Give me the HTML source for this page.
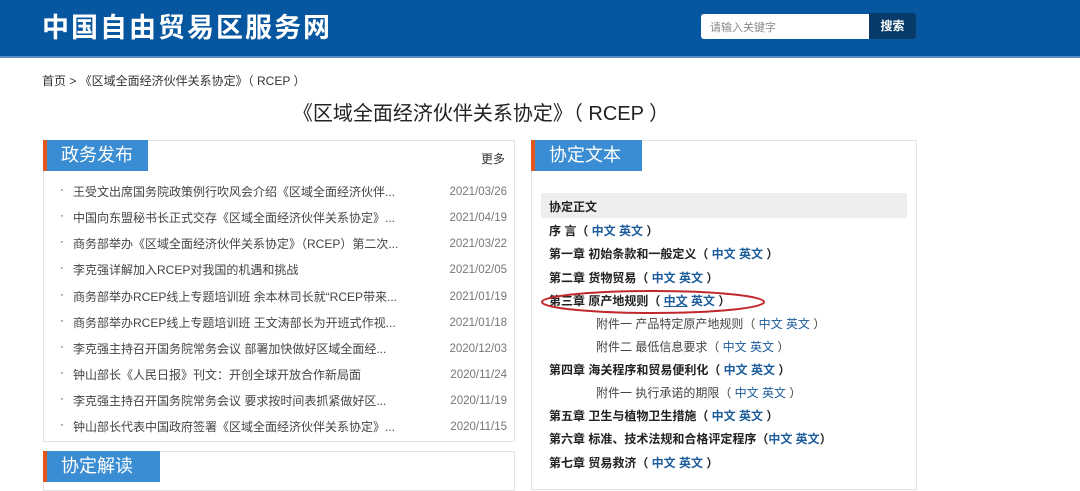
<!DOCTYPE html>
<html><head><meta charset="utf-8"><style>
*{margin:0;padding:0;box-sizing:border-box}
body{width:1080px;height:476px;overflow:hidden;background:#fff;font-family:"Liberation Sans","Noto Sans CJK SC",sans-serif;position:relative;color:#333}
.hdr{position:absolute;left:0;top:0;width:1080px;height:58px;background:#0657a0;border-bottom:2px solid #5b8fc4}
.logo{position:absolute;left:42px;top:6px;font-size:27px;font-weight:bold;color:#fff;letter-spacing:2px}
.inp{position:absolute;left:701px;top:14px;width:168px;height:25px;background:#fff;border-radius:3px 0 0 3px;font-size:11px;color:#888;padding:5px 9px}
.btn{position:absolute;left:869px;top:13px;width:47px;height:26px;background:#083a6a;border-radius:0 3px 3px 0;color:#fff;font-size:12px;font-weight:bold;text-align:center;line-height:26px}
.bc{position:absolute;left:42px;top:72px;font-size:12px;color:#333}
.title{position:absolute;left:0;width:962px;text-align:center;top:97px;font-size:20px;color:#222}
.panel{position:absolute;border:1px solid #e3e3e3;background:#fff}
.tab{position:absolute;left:-1px;top:-1px;height:31px;background:#3a8dd2;border-left:4px solid #e0561e;color:#fff;font-size:18px;line-height:30px;padding-left:14px}
.more{position:absolute;right:9px;top:9px;font-size:12px;color:#333}
.li{position:absolute;left:0;width:471px;font-size:12px;color:#444;height:16px;line-height:16px}
.li span{line-height:16px;top:0}
.li .b{position:absolute;left:16px;top:-3px}
.li .t{position:absolute;left:29px}
.li .d{position:absolute;right:8px;color:#777;font-size:11.5px}
.r{position:absolute;left:17px;font-size:12px;font-weight:bold;color:#222;white-space:nowrap}
.r.s{left:64px;font-weight:normal;color:#444}
.r a{color:#1d5d9b;text-decoration:none}
</style></head><body>
<div class="hdr"><div class="logo">中国自由贸易区服务网</div>
<div class="inp">请输入关键字</div><div class="btn">搜索</div></div>
<div class="bc">首页 &gt; 《区域全面经济伙伴关系协定》（ RCEP ）</div>
<div class="title">《区域全面经济伙伴关系协定》（ RCEP ）</div>

<div class="panel" style="left:43px;top:140px;width:472px;height:302px">
<div class="tab" style="width:105px">政务发布</div><div class="more">更多</div>
<div class="li" style="top:43px"><span class="b">·</span><span class="t">王受文出席国务院政策例行吹风会介绍《区域全面经济伙伴...</span><span class="d">2021/03/26</span></div>
<div class="li" style="top:69px"><span class="b">·</span><span class="t">中国向东盟秘书长正式交存《区域全面经济伙伴关系协定》...</span><span class="d">2021/04/19</span></div>
<div class="li" style="top:95px"><span class="b">·</span><span class="t">商务部举办《区域全面经济伙伴关系协定》（RCEP）第二次...</span><span class="d">2021/03/22</span></div>
<div class="li" style="top:121px"><span class="b">·</span><span class="t">李克强详解加入RCEP对我国的机遇和挑战</span><span class="d">2021/02/05</span></div>
<div class="li" style="top:148px"><span class="b">·</span><span class="t">商务部举办RCEP线上专题培训班 余本林司长就“RCEP带来...</span><span class="d">2021/01/19</span></div>
<div class="li" style="top:174px"><span class="b">·</span><span class="t">商务部举办RCEP线上专题培训班 王文涛部长为开班式作视...</span><span class="d">2021/01/18</span></div>
<div class="li" style="top:200px"><span class="b">·</span><span class="t">李克强主持召开国务院常务会议 部署加快做好区域全面经...</span><span class="d">2020/12/03</span></div>
<div class="li" style="top:226px"><span class="b">·</span><span class="t">钟山部长《人民日报》刊文：开创全球开放合作新局面</span><span class="d">2020/11/24</span></div>
<div class="li" style="top:252px"><span class="b">·</span><span class="t">李克强主持召开国务院常务会议 要求按时间表抓紧做好区...</span><span class="d">2020/11/19</span></div>
<div class="li" style="top:278px"><span class="b">·</span><span class="t">钟山部长代表中国政府签署《区域全面经济伙伴关系协定》...</span><span class="d">2020/11/15</span></div>
</div>
<div class="panel" style="left:43px;top:451px;width:472px;height:40px"><div class="tab" style="width:117px">协定解读</div></div>

<div class="panel" style="left:531px;top:140px;width:386px;height:350px">
<div class="tab" style="width:111px">协定文本</div>
<div style="position:absolute;left:9px;top:52px;width:366px;height:25px;background:#eee"></div>
<div class="r" style="top:57px">协定正文</div>
<div class="r" style="top:81px">序 言（ <a>中文 英文</a> ）</div>
<div class="r" style="top:104px">第一章 初始条款和一般定义（ <a>中文 英文</a> ）</div>
<div class="r" style="top:128px">第二章 货物贸易（ <a>中文 英文</a> ）</div>
<div class="r" style="top:151px">第三章 原产地规则（ <a style="text-decoration:underline">中文</a> <a>英文</a> ）</div>
<div class="r s" style="top:174px">附件一 产品特定原产地规则（ <a>中文 英文</a> ）</div>
<div class="r s" style="top:197px">附件二 最低信息要求（ <a>中文 英文</a> ）</div>
<div class="r" style="top:220px">第四章 海关程序和贸易便利化（ <a>中文 英文</a> ）</div>
<div class="r s" style="top:243px">附件一 执行承诺的期限（ <a>中文 英文</a> ）</div>
<div class="r" style="top:266px">第五章 卫生与植物卫生措施（ <a>中文 英文</a> ）</div>
<div class="r" style="top:289px">第六章 标准、技术法规和合格评定程序（<a>中文 英文</a>）</div>
<div class="r" style="top:313px">第七章 贸易救济（ <a>中文 英文</a> ）</div>
<svg style="position:absolute;left:6px;top:146px" width="230" height="30"><ellipse cx="115" cy="15" rx="111" ry="11" fill="none" stroke="#c0282d" stroke-width="2"/></svg>
</div>
</body></html>
